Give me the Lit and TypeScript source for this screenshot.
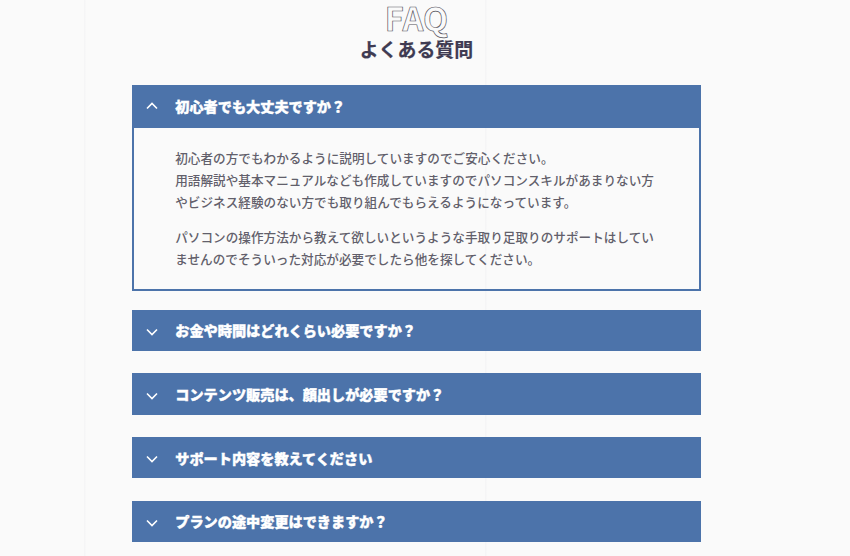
import { LitElement, html, css, svg } from "lit";
import { customElement, property } from "lit/decorators.js";

@customElement("faq-item")
class FaqItem extends LitElement {
  @property() question = "";
  @property({ type: Boolean, reflect: true }) open = false;

  static styles = css`
    :host { display: block; }
    .head {
      display: flex;
      align-items: center;
      box-sizing: border-box;
      height: 41.4px;
      padding: 0 0 0 14px;
      background: #4c73aa;
      color: #fff;
      font-size: 14.17px;
      font-weight: 900;
      line-height: 20px;
    }
    :host([open]) .head { height: 42.8px; padding-bottom: 1.8px; }
    svg { display: block; width: 12px; height: 8px; margin-right: 17.1px; flex: none; position: relative; top: 1.8px; }
    :host([open]) svg { top: 0; }
    path { fill: none; stroke: #fff; stroke-width: 1.6; }
    .question { white-space: nowrap; -webkit-text-stroke: 0.4px #fff; }
    .body {
      box-sizing: border-box;
      height: 163px;
      padding: 19.2px 41px 0;
      border: solid #4c73aa;
      border-width: 0 2px 2px;
    }
  `;

  render() {
    return html`
      <div class="head">
        <svg viewBox="0 0 12 8">${svg`<path d=${this.open ? "M1 6.5 6 1.5 11 6.5" : "M1 1.5 6 6.5 11 1.5"} />`}</svg>
        <span class="question">${this.question}</span>
      </div>
      ${this.open ? html`<div class="body"><slot></slot></div>` : null}
    `;
  }
}

@customElement("app-root")
class AppRoot extends LitElement {
  static styles = css`
    :host {
      display: flow-root;
      box-sizing: border-box;
      height: 556px;
      overflow: hidden;
      font-family: "Noto Sans CJK JP", "Noto Sans", sans-serif;
      color: #625f6b;
      background:
        linear-gradient(#f5f5f6, #f5f5f6) 84px 0 / 1.5px 100% no-repeat,
        linear-gradient(#f5f5f6, #f5f5f6) 485px 0 / 1.5px 100% no-repeat,
        #fafafa;
    }
    .page { width: 568.4px; margin-left: 132.2px; }
    header { display: flex; flex-direction: column; align-items: center; height: 85.2px; }
    .en {
      height: 37px;
      line-height: 34px;
      font-size: 32.6px;
      font-weight: 700;
      color: #fafafa;
      -webkit-text-stroke: 0.65px #55525c;
    }
    h2 { margin: 0; height: 24px; line-height: 24px; font-size: 18.9px; font-weight: 700; color: #3f3b52; -webkit-text-stroke: 0.2px #3f3b52; }
    .list { display: flex; flex-direction: column; gap: 22.3px; }
    .first { margin-bottom: -3.7px; }
    p { margin: 0 0 13px; font-size: 12.6px; letter-spacing: 0.03px; line-height: 22px; font-weight: 500; white-space: nowrap; }
  `;

  private questions = [
    "お金や時間はどれくらい必要ですか？",
    "コンテンツ販売は、顔出しが必要ですか？",
    "サポート内容を教えてください",
    "プランの途中変更はできますか？",
  ];

  render() {
    return html`
      <div class="page">
        <header>
          <div class="en">FAQ</div>
          <h2>よくある質問</h2>
        </header>
        <div class="list">
          <faq-item class="first" open question="初心者でも大丈夫ですか？">
            <p>初心者の方でもわかるように説明していますのでご安心ください。<br />用語解説や基本マニュアルなども作成していますのでパソコンスキルがあまりない方<br />やビジネス経験のない方でも取り組んでもらえるようになっています。</p>
            <p>パソコンの操作方法から教えて欲しいというような手取り足取りのサポートはしてい<br />ませんのでそういった対応が必要でしたら他を探してください。</p>
          </faq-item>
          ${this.questions.map((q) => html`<faq-item question=${q}></faq-item>`)}
        </div>
      </div>
    `;
  }
}
